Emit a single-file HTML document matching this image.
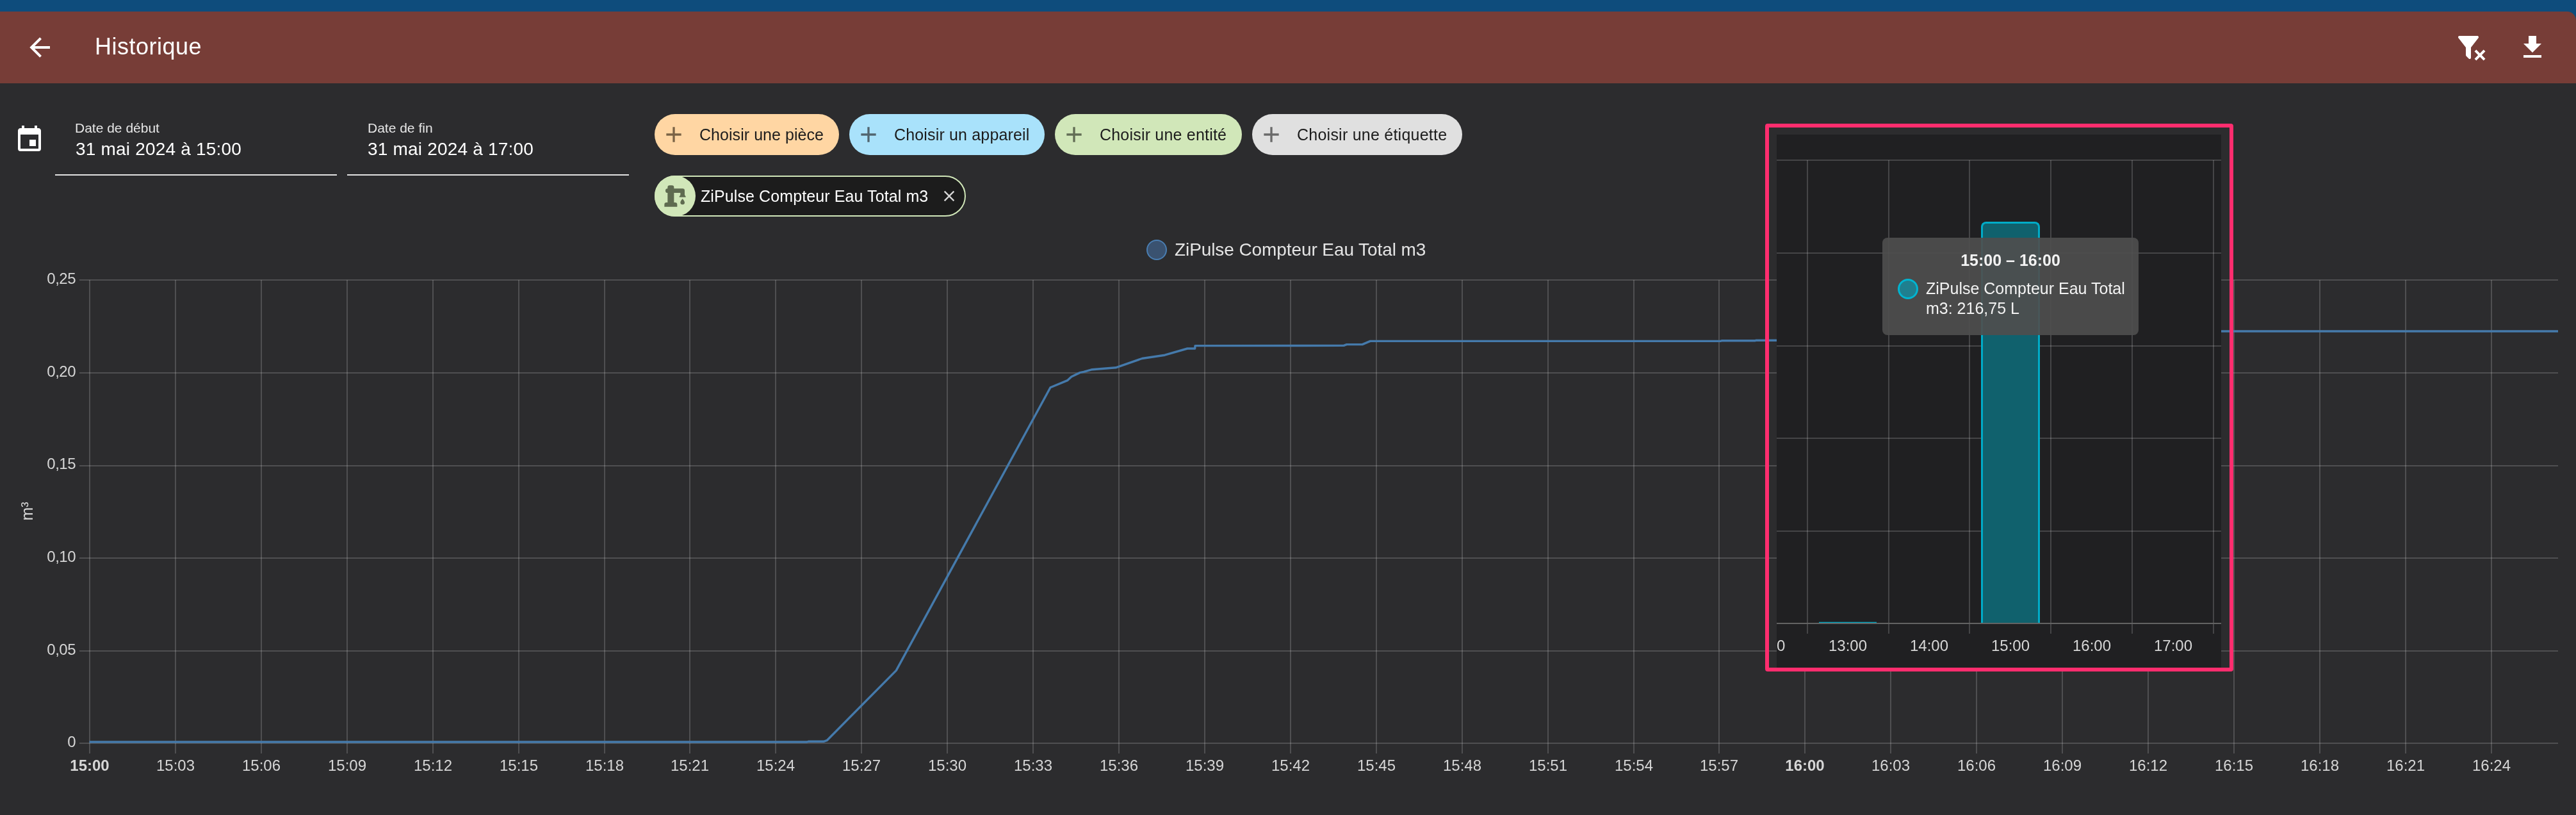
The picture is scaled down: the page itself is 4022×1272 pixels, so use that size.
<!DOCTYPE html><html><head><meta charset="utf-8"><style>
html,body{margin:0;padding:0;width:4022px;height:1272px;overflow:hidden;background:#2c2c2e;font-family:"Liberation Sans", sans-serif;}
.t{position:absolute;white-space:nowrap;line-height:1;will-change:transform;}
svg{position:absolute;}
</style></head><body>
<div style="position:absolute;left:0.0px;top:0.0px;width:4022.0px;height:40.0px;background:#0e4c7c"></div>
<div style="position:absolute;left:0.0px;top:18.0px;width:4022.0px;height:112.0px;background:#773d37;border-top-right-radius:14px"></div>
<svg style="left:38px;top:50px" width="48" height="48" viewBox="0 0 24 24"><path fill="#fff" d="M20,11V13H8L13.5,18.5L12.08,19.92L4.16,12L12.08,4.08L13.5,5.5L8,11H20Z"/></svg>
<div class="t" style="left:148.3px;top:54.9px;font-size:36px;color:#fff;font-weight:400;letter-spacing:0.5px;">Historique</div>
<svg style="left:3834px;top:50px" width="48" height="48" viewBox="0 0 24 24"><path fill="#fff" d="M14.76,20.83L17.6,18L14.76,15.17L16.17,13.76L19,16.57L21.83,13.76L23.24,15.17L20.43,18L23.24,20.83L21.83,22.24L19,19.4L16.17,22.24L14.76,20.83M12,12V19.88C12.04,20.18 11.94,20.5 11.71,20.71C11.32,21.1 10.69,21.1 10.3,20.71L8.29,18.7C8.06,18.47 7.96,18.16 8,17.87V12H7.97L2.21,4.62C1.87,4.19 1.95,3.56 2.38,3.22C2.57,3.08 2.78,3 3,3H17C17.22,3 17.43,3.08 17.62,3.22C18.05,3.56 18.13,4.19 17.79,4.62L12.03,12H12Z"/></svg>
<svg style="left:3930px;top:50px" width="48" height="48" viewBox="0 0 24 24"><path fill="#fff" d="M5,20H19V18H5M19,9H15V3H9V9H5L12,16L19,9Z"/></svg>
<svg style="left:22px;top:194px" width="48" height="48" viewBox="0 0 24 24"><path fill="#fff" d="M19,19H5V8H19M16,1V3H8V1H6V3H5C3.89,3 3,3.89 3,5V19A2,2 0 0,0 5,21H19A2,2 0 0,0 21,19V5C21,3.89 20.1,3 19,3H18V1M17,12H12V17H17V12Z"/></svg>
<div style="position:absolute;left:86.0px;top:272.0px;width:440.0px;height:2.0px;background:#e2e2e2"></div>
<div style="position:absolute;left:542.0px;top:272.0px;width:440.0px;height:2.0px;background:#e2e2e2"></div>
<div class="t" style="left:117.2px;top:189.0px;font-size:21px;color:#e6e6e6;font-weight:400;letter-spacing:0px;">Date de début</div>
<div class="t" style="left:117.7px;top:218.5px;font-size:28px;color:#fff;font-weight:400;letter-spacing:0.2px;">31 mai 2024 à 15:00</div>
<div class="t" style="left:573.6px;top:189.0px;font-size:21px;color:#e6e6e6;font-weight:400;letter-spacing:0px;">Date de fin</div>
<div class="t" style="left:574.2px;top:218.5px;font-size:28px;color:#fff;font-weight:400;letter-spacing:0.2px;">31 mai 2024 à 17:00</div>
<div style="position:absolute;left:1022.0px;top:178.0px;width:288.0px;height:64.0px;background:#ffd6a3;border-radius:32px"></div>
<svg style="left:1032px;top:190px" width="40" height="40" viewBox="0 0 24 24"><path fill="#7a6346" d="M19,13H13V19H11V13H5V11H11V5H13V11H19V13Z"/></svg>
<div class="t" style="left:1092.0px;top:197.9px;font-size:25px;color:#1c1c1c;font-weight:400;letter-spacing:0.05px;">Choisir une pièce</div>
<div style="position:absolute;left:1326.0px;top:178.0px;width:305.0px;height:64.0px;background:#a9e2fb;border-radius:32px"></div>
<svg style="left:1336px;top:190px" width="40" height="40" viewBox="0 0 24 24"><path fill="#51656f" d="M19,13H13V19H11V13H5V11H11V5H13V11H19V13Z"/></svg>
<div class="t" style="left:1396.0px;top:197.9px;font-size:25px;color:#1c1c1c;font-weight:400;letter-spacing:0.16px;">Choisir un appareil</div>
<div style="position:absolute;left:1647.0px;top:178.0px;width:292.0px;height:64.0px;background:#d1e7b9;border-radius:32px"></div>
<svg style="left:1657px;top:190px" width="40" height="40" viewBox="0 0 24 24"><path fill="#626d55" d="M19,13H13V19H11V13H5V11H11V5H13V11H19V13Z"/></svg>
<div class="t" style="left:1717.0px;top:197.9px;font-size:25px;color:#1c1c1c;font-weight:400;letter-spacing:0.2px;">Choisir une entité</div>
<div style="position:absolute;left:1955.0px;top:178.0px;width:328.0px;height:64.0px;background:#e0e0e0;border-radius:32px"></div>
<svg style="left:1965px;top:190px" width="40" height="40" viewBox="0 0 24 24"><path fill="#6a6a6a" d="M19,13H13V19H11V13H5V11H11V5H13V11H19V13Z"/></svg>
<div class="t" style="left:2025.0px;top:197.9px;font-size:25px;color:#1c1c1c;font-weight:400;letter-spacing:0.24px;">Choisir une étiquette</div>
<div style="position:absolute;left:1022.0px;top:274.0px;width:486.0px;height:64.0px;box-sizing:border-box;border:2px solid #d1e7b9;background:#1c1c1c;border-radius:32px"></div>
<div style="position:absolute;left:1022.0px;top:274.0px;width:64.0px;height:64.0px;background:#d1e7b9;border-radius:32px"></div>
<svg style="left:1034px;top:286px" width="40" height="40" viewBox="0 0 24 24"><path fill="#5f6b50" d="M19,14.5C19,14.5 21,16.67 21,18A2,2 0 0,1 19,20A2,2 0 0,1 17,18C17,16.67 19,14.5 19,14.5ZM5,18V9A2,2 0 0,1 3,7A2,2 0 0,1 5,5V4A2,2 0 0,1 7,2H9A2,2 0 0,1 11,4V5H19A2,2 0 0,1 21,7V11L22,12.4V13H16V12.4L17,11V9H11V18H12A2,2 0 0,1 14,20V22H2V20A2,2 0 0,1 4,18H5Z"/></svg>
<div class="t" style="left:1093.9px;top:293.8px;font-size:25px;color:#fff;font-weight:400;letter-spacing:0.1px;">ZiPulse Compteur Eau Total m3</div>
<svg style="left:1468px;top:292px" width="28" height="28" viewBox="0 0 24 24"><path fill="#d6d6d6" d="M19,6.41L17.59,5L12,10.59L6.41,5L5,6.41L10.59,12L5,17.59L6.41,19L12,13.41L17.59,19L19,17.59L13.41,12L19,6.41Z"/></svg>
<div style="position:absolute;left:1790.0px;top:374.0px;width:32.0px;height:32.0px;box-sizing:border-box;border:2px solid #4a7eb2;background:#3a5270;border-radius:50%"></div>
<div class="t" style="left:1833.7px;top:375.5px;font-size:28px;color:#e4e4e4;font-weight:400;letter-spacing:-0.09px;">ZiPulse Compteur Eau Total m3</div>
<svg style="left:0;top:0" width="4022" height="1272"><line x1="124" y1="437" x2="3994" y2="437" stroke="rgba(255,255,255,0.17)" stroke-width="2"/><line x1="124" y1="582" x2="3994" y2="582" stroke="rgba(255,255,255,0.17)" stroke-width="2"/><line x1="124" y1="727" x2="3994" y2="727" stroke="rgba(255,255,255,0.17)" stroke-width="2"/><line x1="124" y1="871" x2="3994" y2="871" stroke="rgba(255,255,255,0.17)" stroke-width="2"/><line x1="124" y1="1016" x2="3994" y2="1016" stroke="rgba(255,255,255,0.17)" stroke-width="2"/><line x1="124" y1="1160" x2="3994" y2="1160" stroke="rgba(255,255,255,0.17)" stroke-width="2"/><line x1="140" y1="437" x2="140" y2="1176" stroke="rgba(255,255,255,0.17)" stroke-width="2"/><line x1="274" y1="437" x2="274" y2="1176" stroke="rgba(255,255,255,0.17)" stroke-width="2"/><line x1="408" y1="437" x2="408" y2="1176" stroke="rgba(255,255,255,0.17)" stroke-width="2"/><line x1="542" y1="437" x2="542" y2="1176" stroke="rgba(255,255,255,0.17)" stroke-width="2"/><line x1="676" y1="437" x2="676" y2="1176" stroke="rgba(255,255,255,0.17)" stroke-width="2"/><line x1="810" y1="437" x2="810" y2="1176" stroke="rgba(255,255,255,0.17)" stroke-width="2"/><line x1="944" y1="437" x2="944" y2="1176" stroke="rgba(255,255,255,0.17)" stroke-width="2"/><line x1="1077" y1="437" x2="1077" y2="1176" stroke="rgba(255,255,255,0.17)" stroke-width="2"/><line x1="1211" y1="437" x2="1211" y2="1176" stroke="rgba(255,255,255,0.17)" stroke-width="2"/><line x1="1345" y1="437" x2="1345" y2="1176" stroke="rgba(255,255,255,0.17)" stroke-width="2"/><line x1="1479" y1="437" x2="1479" y2="1176" stroke="rgba(255,255,255,0.17)" stroke-width="2"/><line x1="1613" y1="437" x2="1613" y2="1176" stroke="rgba(255,255,255,0.17)" stroke-width="2"/><line x1="1747" y1="437" x2="1747" y2="1176" stroke="rgba(255,255,255,0.17)" stroke-width="2"/><line x1="1881" y1="437" x2="1881" y2="1176" stroke="rgba(255,255,255,0.17)" stroke-width="2"/><line x1="2015" y1="437" x2="2015" y2="1176" stroke="rgba(255,255,255,0.17)" stroke-width="2"/><line x1="2149" y1="437" x2="2149" y2="1176" stroke="rgba(255,255,255,0.17)" stroke-width="2"/><line x1="2283" y1="437" x2="2283" y2="1176" stroke="rgba(255,255,255,0.17)" stroke-width="2"/><line x1="2417" y1="437" x2="2417" y2="1176" stroke="rgba(255,255,255,0.17)" stroke-width="2"/><line x1="2551" y1="437" x2="2551" y2="1176" stroke="rgba(255,255,255,0.17)" stroke-width="2"/><line x1="2684" y1="437" x2="2684" y2="1176" stroke="rgba(255,255,255,0.17)" stroke-width="2"/><line x1="2818" y1="437" x2="2818" y2="1176" stroke="rgba(255,255,255,0.17)" stroke-width="2"/><line x1="2952" y1="437" x2="2952" y2="1176" stroke="rgba(255,255,255,0.17)" stroke-width="2"/><line x1="3086" y1="437" x2="3086" y2="1176" stroke="rgba(255,255,255,0.17)" stroke-width="2"/><line x1="3220" y1="437" x2="3220" y2="1176" stroke="rgba(255,255,255,0.17)" stroke-width="2"/><line x1="3354" y1="437" x2="3354" y2="1176" stroke="rgba(255,255,255,0.17)" stroke-width="2"/><line x1="3488" y1="437" x2="3488" y2="1176" stroke="rgba(255,255,255,0.17)" stroke-width="2"/><line x1="3622" y1="437" x2="3622" y2="1176" stroke="rgba(255,255,255,0.17)" stroke-width="2"/><line x1="3756" y1="437" x2="3756" y2="1176" stroke="rgba(255,255,255,0.17)" stroke-width="2"/><line x1="3890" y1="437" x2="3890" y2="1176" stroke="rgba(255,255,255,0.17)" stroke-width="2"/><path d="M139.7,1158 L1260,1158 L1262,1157.3 L1286,1157.3 L1291.5,1155.3 L1399.3,1046.4 L1640,604.7 L1666.9,593.6 L1672.8,588 L1686,581.6 L1692,580.4 L1705.2,576.7 L1742,573.8 L1783.2,559.5 L1818.6,554.2 L1853.9,544 L1865.7,544 L1866,539.6 L2098,539.4 L2102.6,537.6 L2127,537.6 L2139.4,532.4 L2686,532.4 L2688,531.8 L2740,531.8 L2742,531.2 L2900,531.2 L3000,517 L3994,517" fill="none" stroke="#457aab" stroke-width="3.4" stroke-linejoin="round"/></svg>
<div class="t" style="left:-82px;width:200px;text-align:right;top:423.1px;font-size:24px;color:#d6d6d6;letter-spacing:-0.5px;padding-right:0px">0,25</div>
<div class="t" style="left:-82px;width:200px;text-align:right;top:567.7px;font-size:24px;color:#d6d6d6;letter-spacing:-0.5px;padding-right:0px">0,20</div>
<div class="t" style="left:-82px;width:200px;text-align:right;top:712.3px;font-size:24px;color:#d6d6d6;letter-spacing:-0.5px;padding-right:0px">0,15</div>
<div class="t" style="left:-82px;width:200px;text-align:right;top:856.9px;font-size:24px;color:#d6d6d6;letter-spacing:-0.5px;padding-right:0px">0,10</div>
<div class="t" style="left:-82px;width:200px;text-align:right;top:1001.5px;font-size:24px;color:#d6d6d6;letter-spacing:-0.5px;padding-right:0px">0,05</div>
<div class="t" style="left:-82px;width:200px;text-align:right;top:1146.1px;font-size:24px;color:#d6d6d6;letter-spacing:-0.5px;padding-right:0px">0</div>
<div class="t" style="left:90.0px;width:100px;text-align:center;top:1182.8px;font-size:24px;color:#d6d6d6;font-weight:700">15:00</div>
<div class="t" style="left:224.0px;width:100px;text-align:center;top:1182.8px;font-size:24px;color:#d6d6d6;font-weight:400">15:03</div>
<div class="t" style="left:358.0px;width:100px;text-align:center;top:1182.8px;font-size:24px;color:#d6d6d6;font-weight:400">15:06</div>
<div class="t" style="left:492.0px;width:100px;text-align:center;top:1182.8px;font-size:24px;color:#d6d6d6;font-weight:400">15:09</div>
<div class="t" style="left:626.0px;width:100px;text-align:center;top:1182.8px;font-size:24px;color:#d6d6d6;font-weight:400">15:12</div>
<div class="t" style="left:760.0px;width:100px;text-align:center;top:1182.8px;font-size:24px;color:#d6d6d6;font-weight:400">15:15</div>
<div class="t" style="left:894.0px;width:100px;text-align:center;top:1182.8px;font-size:24px;color:#d6d6d6;font-weight:400">15:18</div>
<div class="t" style="left:1027.0px;width:100px;text-align:center;top:1182.8px;font-size:24px;color:#d6d6d6;font-weight:400">15:21</div>
<div class="t" style="left:1161.0px;width:100px;text-align:center;top:1182.8px;font-size:24px;color:#d6d6d6;font-weight:400">15:24</div>
<div class="t" style="left:1295.0px;width:100px;text-align:center;top:1182.8px;font-size:24px;color:#d6d6d6;font-weight:400">15:27</div>
<div class="t" style="left:1429.0px;width:100px;text-align:center;top:1182.8px;font-size:24px;color:#d6d6d6;font-weight:400">15:30</div>
<div class="t" style="left:1563.0px;width:100px;text-align:center;top:1182.8px;font-size:24px;color:#d6d6d6;font-weight:400">15:33</div>
<div class="t" style="left:1697.0px;width:100px;text-align:center;top:1182.8px;font-size:24px;color:#d6d6d6;font-weight:400">15:36</div>
<div class="t" style="left:1831.0px;width:100px;text-align:center;top:1182.8px;font-size:24px;color:#d6d6d6;font-weight:400">15:39</div>
<div class="t" style="left:1965.0px;width:100px;text-align:center;top:1182.8px;font-size:24px;color:#d6d6d6;font-weight:400">15:42</div>
<div class="t" style="left:2099.0px;width:100px;text-align:center;top:1182.8px;font-size:24px;color:#d6d6d6;font-weight:400">15:45</div>
<div class="t" style="left:2233.0px;width:100px;text-align:center;top:1182.8px;font-size:24px;color:#d6d6d6;font-weight:400">15:48</div>
<div class="t" style="left:2367.0px;width:100px;text-align:center;top:1182.8px;font-size:24px;color:#d6d6d6;font-weight:400">15:51</div>
<div class="t" style="left:2501.0px;width:100px;text-align:center;top:1182.8px;font-size:24px;color:#d6d6d6;font-weight:400">15:54</div>
<div class="t" style="left:2634.0px;width:100px;text-align:center;top:1182.8px;font-size:24px;color:#d6d6d6;font-weight:400">15:57</div>
<div class="t" style="left:2768.0px;width:100px;text-align:center;top:1182.8px;font-size:24px;color:#d6d6d6;font-weight:700">16:00</div>
<div class="t" style="left:2902.0px;width:100px;text-align:center;top:1182.8px;font-size:24px;color:#d6d6d6;font-weight:400">16:03</div>
<div class="t" style="left:3036.0px;width:100px;text-align:center;top:1182.8px;font-size:24px;color:#d6d6d6;font-weight:400">16:06</div>
<div class="t" style="left:3170.0px;width:100px;text-align:center;top:1182.8px;font-size:24px;color:#d6d6d6;font-weight:400">16:09</div>
<div class="t" style="left:3304.0px;width:100px;text-align:center;top:1182.8px;font-size:24px;color:#d6d6d6;font-weight:400">16:12</div>
<div class="t" style="left:3438.0px;width:100px;text-align:center;top:1182.8px;font-size:24px;color:#d6d6d6;font-weight:400">16:15</div>
<div class="t" style="left:3572.0px;width:100px;text-align:center;top:1182.8px;font-size:24px;color:#d6d6d6;font-weight:400">16:18</div>
<div class="t" style="left:3706.0px;width:100px;text-align:center;top:1182.8px;font-size:24px;color:#d6d6d6;font-weight:400">16:21</div>
<div class="t" style="left:3840.0px;width:100px;text-align:center;top:1182.8px;font-size:24px;color:#d6d6d6;font-weight:400">16:24</div>
<div class="t" style="left:22px;top:786px;width:40px;text-align:center;font-size:25px;color:#d6d6d6;transform:rotate(-90deg);transform-origin:20px 12px">m³</div>
<div style="position:absolute;left:2774px;top:210px;width:694px;height:832px;background:#202022;overflow:hidden"><svg style="left:0;top:0" width="694" height="832"><line x1="0" y1="40" x2="694" y2="40" stroke="rgba(255,255,255,0.17)" stroke-width="2"/><line x1="0" y1="185" x2="694" y2="185" stroke="rgba(255,255,255,0.17)" stroke-width="2"/><line x1="0" y1="330" x2="694" y2="330" stroke="rgba(255,255,255,0.17)" stroke-width="2"/><line x1="0" y1="474" x2="694" y2="474" stroke="rgba(255,255,255,0.17)" stroke-width="2"/><line x1="0" y1="619" x2="694" y2="619" stroke="rgba(255,255,255,0.17)" stroke-width="2"/><line x1="0" y1="763" x2="694" y2="763" stroke="rgba(255,255,255,0.17)" stroke-width="2"/><line x1="48" y1="40" x2="48" y2="779" stroke="rgba(255,255,255,0.17)" stroke-width="2"/><line x1="175" y1="40" x2="175" y2="779" stroke="rgba(255,255,255,0.17)" stroke-width="2"/><line x1="301" y1="40" x2="301" y2="779" stroke="rgba(255,255,255,0.17)" stroke-width="2"/><line x1="428" y1="40" x2="428" y2="779" stroke="rgba(255,255,255,0.17)" stroke-width="2"/><line x1="555" y1="40" x2="555" y2="779" stroke="rgba(255,255,255,0.17)" stroke-width="2"/><line x1="682" y1="40" x2="682" y2="779" stroke="rgba(255,255,255,0.17)" stroke-width="2"/><line x1="66" y1="761.6" x2="156" y2="761.6" stroke="#00acc8" stroke-width="1.5"/></svg><div style="position:absolute;left:319.0px;top:136.0px;width:92.0px;height:626.0px;box-sizing:border-box;border:3px solid #00acc8;border-bottom:none;background:#10616d;border-radius:8px 8px 0 0"></div>
<div style="position:absolute;left:0.0px;top:762.0px;width:694.0px;height:2.0px;background:#636363"></div>
<div class="t" style="left:0.0px;top:785.9px;font-size:24px;color:#d6d6d6;font-weight:400;letter-spacing:0px;">0</div>
<div class="t" style="left:61.3px;width:100px;text-align:center;top:785.9px;font-size:24px;color:#d6d6d6;font-weight:400">13:00</div>
<div class="t" style="left:188.1px;width:100px;text-align:center;top:785.9px;font-size:24px;color:#d6d6d6;font-weight:400">14:00</div>
<div class="t" style="left:314.9px;width:100px;text-align:center;top:785.9px;font-size:24px;color:#d6d6d6;font-weight:400">15:00</div>
<div class="t" style="left:441.7px;width:100px;text-align:center;top:785.9px;font-size:24px;color:#d6d6d6;font-weight:400">16:00</div>
<div class="t" style="left:568.5px;width:100px;text-align:center;top:785.9px;font-size:24px;color:#d6d6d6;font-weight:400">17:00</div>
<div style="position:absolute;left:165.0px;top:161.0px;width:400.0px;height:151.5px;background:rgba(78,78,78,0.92);border-radius:8px"></div>
<div class="t" style="left:215.0px;width:300px;text-align:center;top:183.8px;font-size:25px;color:#f2f2f2;font-weight:700">15:00 – 16:00</div>
<div style="position:absolute;left:189.0px;top:225.0px;width:32.0px;height:32.0px;box-sizing:border-box;border:3px solid #00b4d0;background:#1f7f8f;border-radius:50%"></div>
<div class="t" style="left:232.7px;top:227.8px;font-size:25px;color:#f2f2f2;font-weight:400;letter-spacing:0px;">ZiPulse Compteur Eau Total</div>
<div class="t" style="left:232.7px;top:259.4px;font-size:25px;color:#f2f2f2;font-weight:400;letter-spacing:0px;">m3: 216,75 L</div>
</div>
<div style="position:absolute;left:2756.0px;top:192.7px;width:730.5px;height:855.6px;box-sizing:border-box;border:6px solid #ff2d6e;border-radius:4px"></div>
</body></html>
